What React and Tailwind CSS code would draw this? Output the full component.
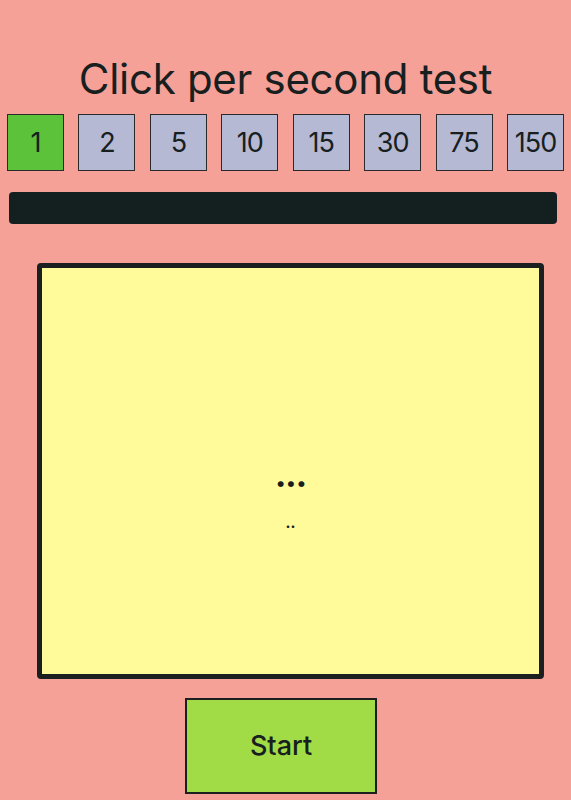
const counts = [1, 2, 5, 10, 15, 30, 75, 150]

const App = () => {
    const selected = 1

    return (
        <div className="min-h-[800px] w-[571px] overflow-hidden bg-[#f6a198] font-['Inter',sans-serif] text-[#17201f]">
            <h1 className="pt-[54px] text-center text-[42px] leading-[50px] tracking-[-0.3px]">Click per second test</h1>

            {/* Duration picker */}
            <div className="mt-[10px] flex justify-between px-[7px]">
                {counts.map((n) => (
                    <button
                        key={n}
                        className={`flex h-[57px] w-[57px] shrink-0 items-center justify-center border border-[#2a2a2a] text-[27px] leading-none tracking-[-1px] ${n === selected ? 'bg-[#5bc23a]' : 'bg-[#b5b9d3]'}`}
                    >
                        {n}
                    </button>
                ))}
            </div>

            {/* Progress bar */}
            <div className="ml-[9px] mt-[21px] h-[32px] w-[548px] rounded-[4px] bg-[#142020]" />

            {/* Click area */}
            <div className="ml-[37px] mt-[39px] flex h-[416px] w-[507px] flex-col items-center justify-center rounded-[4px] border-[5px] border-[#1b1f1f] bg-[#fffb9a] pt-[48px]">
                <span className="text-[32px] font-extrabold leading-[30px] tracking-[-1px]">...</span>
                <span className="mt-[25px] text-[14px] font-extrabold leading-[14px]">..</span>
            </div>

            <button className="ml-[185px] mt-[19px] flex h-[96px] w-[192px] items-center justify-center border-2 border-[#1b1f1f] bg-[#a1dc47] text-[27px] font-medium">
                Start
            </button>
        </div>
    )
}

export default App
